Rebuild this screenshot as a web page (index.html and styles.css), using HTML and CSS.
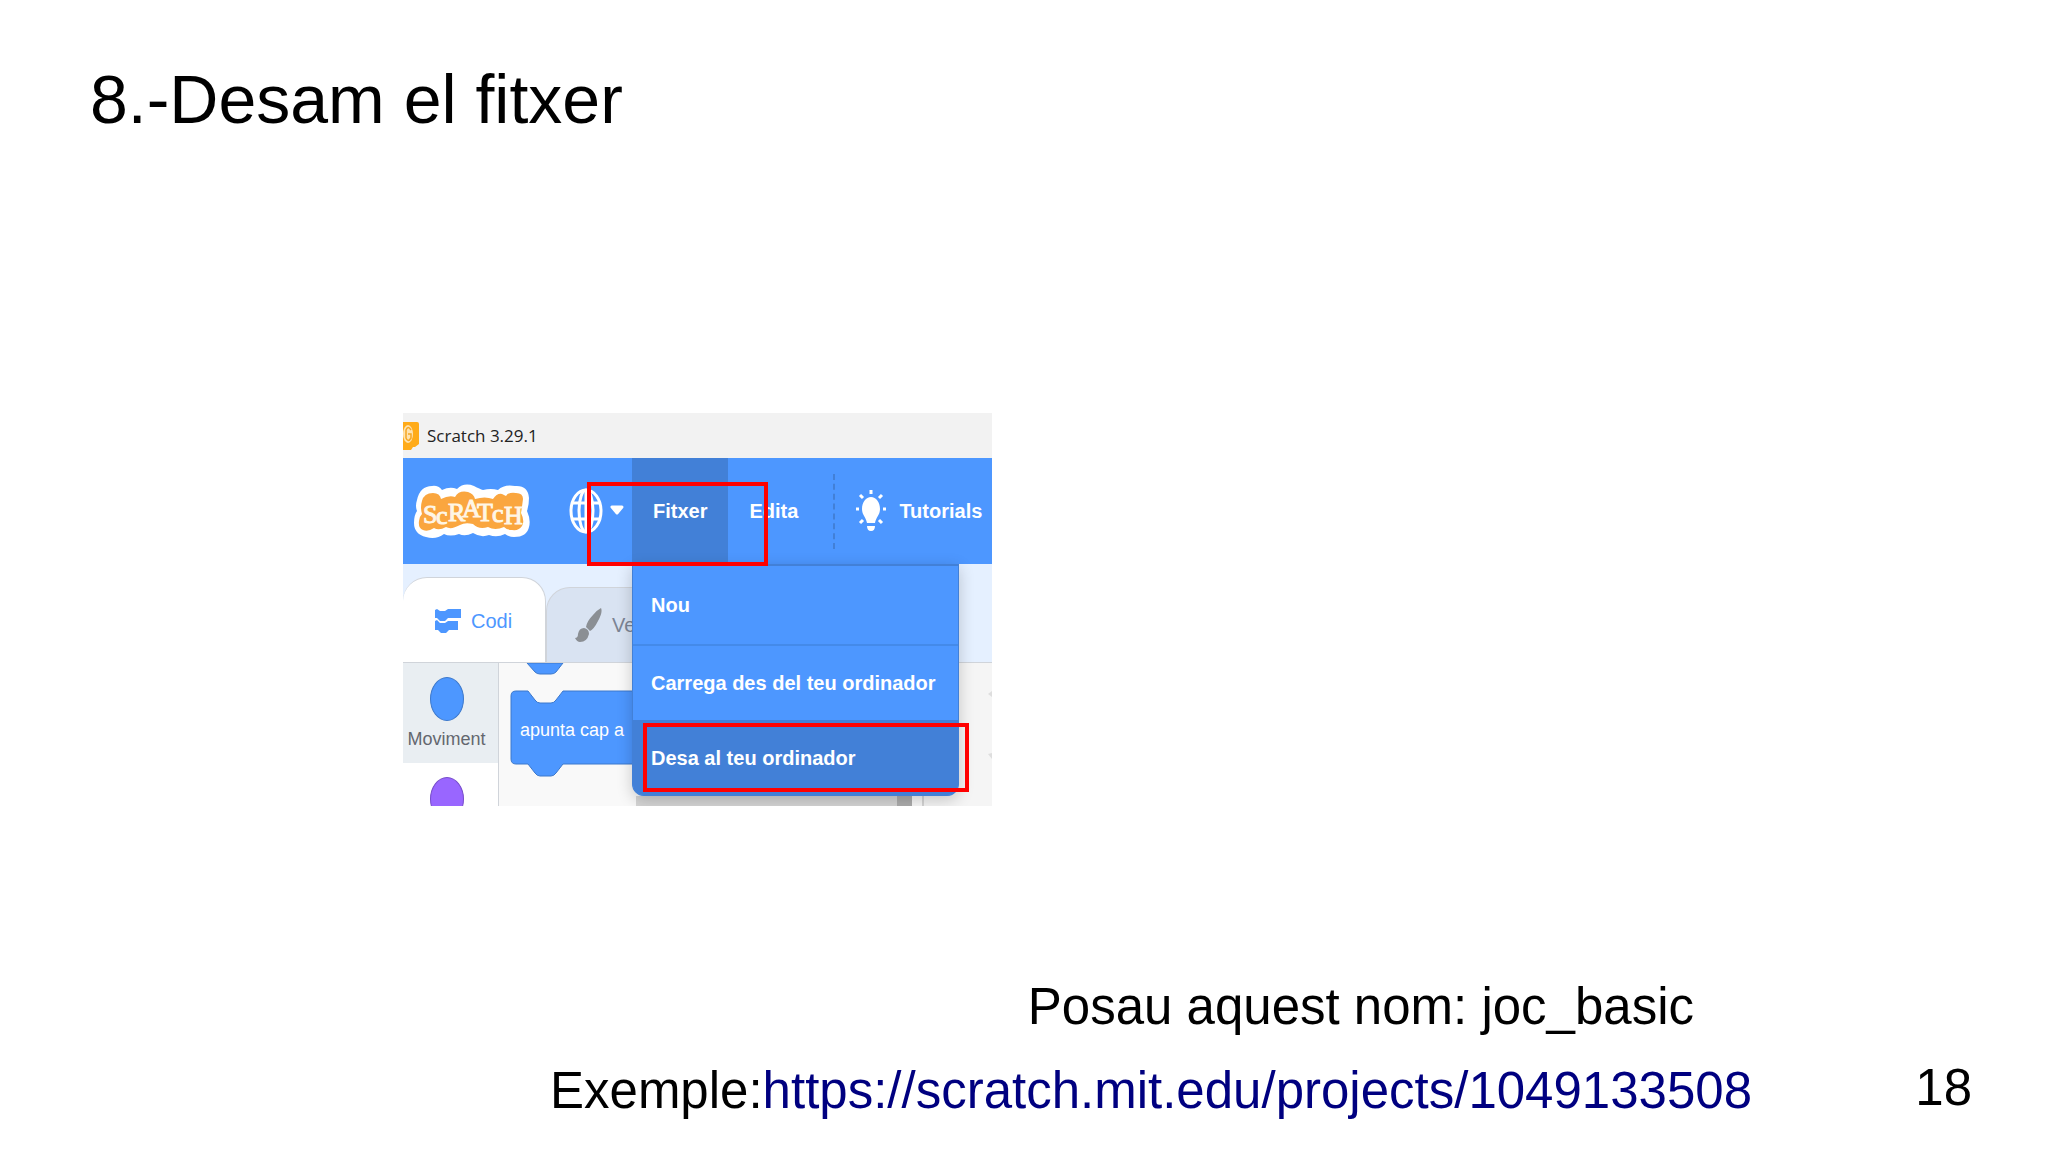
FILE: index.html
```
<!DOCTYPE html>
<html lang="ca">
<head>
    <meta charset="UTF-8">
    <meta name="viewport" content="width=device-width, initial-scale=1.0">
    <title>8.-Desam el fitxer</title>
    <link rel="stylesheet" href="styles.css">
</head>
<body>
    <main class="slide">
        <h1>8.-Desam el fitxer</h1>

        <figure class="app">
            <div class="titlebar">
                <svg class="app-icon" width="16" height="30" viewBox="0 0 16 30">
                    <path d="M0 1h14q2 0 2 2v20l-4 3h-2l-2 3H0z" fill="#ffab19"/>
                    <ellipse cx="5" cy="13" rx="5" ry="9" fill="#ffe3b0"/>
                    <path d="M8 9q-3-5-5 0v8q2 5 5 0v-4H5" fill="none" stroke="#f5a623" stroke-width="1.5"/>
                </svg>
                <span>Scratch 3.29.1</span>
            </div>

            <nav class="menubar">
                <svg class="logo" width="116" height="56" viewBox="0 0 116 56">
                    <path d="M3 17Q6 3 18 3q6-1 10 4 8-4 15-1Q50-1 60 3q6 3 9 4 8-2 15 0 6-6 17-4 13-1 14 12 0 7-2 13 4 9 2 16-2 10-15 10-5 0-9-3-8 4-16 1-8 3-16-2-8 4-14 1-9 3-15 0-8 6-18 3Q0 51 0 40q0-8 3-12-2-5 0-11z" fill="#fff"/>
                    <path d="M8 18q2-8 11-8 7 0 8 6 8-4 14-2 4-7 13-5 6 2 7 7 10-3 18 0 4-6 9-5l4 2q2-4 10-3 7 0 7 6-1 8-2 14 4 8 1 13-3 5-10 4-5 0-8-3-9 4-16 0-9 3-15-3-8-2-13 1-9 5-14 2-7 4-12 1-6 4-11 2-5-2-4-9 0-4 3-7-2-7 0-13z" fill="#faa63f"/>
                    <text class="logo-text" x="9 22 34 48 63 78 90" y="40 41 38 34 38 39 41">ScRATcH</text>
                </svg>
                <button class="language" type="button" aria-label="Idioma">
                    <svg width="56" height="46" viewBox="0 0 56 46" fill="none" stroke="#fff" stroke-width="3">
                        <ellipse cx="18" cy="23" rx="15" ry="21"/>
                        <ellipse cx="18" cy="23" rx="7" ry="21"/>
                        <path d="M18 2v42M5 15h26M5 31h26"/>
                        <path d="M44 19h10l-5 6z" fill="#fff" stroke-linejoin="round"/>
                    </svg>
                </button>
                <button class="menu-item active" type="button">Fitxer</button>
                <button class="menu-item" type="button">Edita</button>
                <span class="divider"></span>
                <button class="tutorials" type="button">
                    <svg width="32" height="44" viewBox="0 0 32 44">
                        <path d="M16 8c5 0 9 5 9 12 0 6-4 8-5 14h-8c-1-6-5-8-5-14C7 13 11 8 16 8z" fill="#fff"/>
                        <path d="M12 37h8q0 5-4 5t-4-5z" fill="#fff"/>
                        <path d="M16 1v4M5 6l3 3M27 6l-3 3M1 20h3M28 20h3M5 34l3-3M27 34l-3-3" stroke="#fff" stroke-width="3"/>
                    </svg>
                    Tutorials
                </button>
                <span class="mark mark-menu"></span>
            </nav>

            <div class="tabs">
                <button class="tab selected" type="button">
                    <svg width="26" height="26" viewBox="0 0 26 26" fill="#4d97ff">
                        <path d="M0 2l2-1 3 2h5l3-2h13v9H13l-3 3H5l-3-3H0z"/>
                        <path d="M0 13l2-1 3 3h5l3-2h10v9h-9l-3 3H6l-3-3H0z"/>
                    </svg>
                    Codi
                </button>
                <button class="tab" type="button">
                    <svg width="27" height="34" viewBox="0 0 27 34" fill="#8b8f94">
                        <path d="M26 0q2 4-3 13-4 8-8 10l-4-4q1-6 7-12 4-5 8-7z"/>
                        <path d="M9 20q5 1 5 6-2 8-9 8-3 0-5-4 3 0 3-4 1-6 6-6z"/>
                    </svg>
                    Ve
                </button>
            </div>

            <div class="editor">
                <div class="categories">
                    <div class="category current">
                        <span class="bubble"></span>
                        Moviment
                    </div>
                    <div class="category">
                        <span class="bubble looks"></span>
                    </div>
                </div>
                <div class="palette">
                    <svg width="134" height="114" viewBox="0 0 134 114">
                        <path d="M17 0h36l-7 9q-2 2-5 2H30q-3 0-5-2z" fill="#4d97ff" stroke="#3d79cc"/>
                        <path d="M1 33q0-5 5-5h12l7 9q2 3 5 3h11q3 0 5-3l7-9h84v73H53l-7 9q-2 3-5 3H30q-3 0-5-3l-7-9H6q-5 0-5-5z" fill="#4d97ff" stroke="#3d79cc"/>
                        <text class="block-text" x="10" y="73">apunta cap a</text>
                    </svg>
                </div>
                <span class="scrollbar"></span>
                <div class="workspace">
                    <svg width="4" height="72" viewBox="0 0 4 72" fill="#dedede">
                        <path d="M4 0v6L0 3zM4 62v6l-4-5z"/>
                    </svg>
                </div>
            </div>

            <ul class="menu">
                <li><button type="button">Nou</button></li>
                <li><button type="button">Carrega des del teu ordinador</button></li>
                <li class="hover"><button type="button">Desa al teu ordinador</button><span class="mark mark-save"></span></li>
            </ul>
        </figure>

        <footer>
            <div class="notes">
                <p class="file-name">Posau aquest nom: joc_basic</p>
                <p>Exemple:<a href="https://scratch.mit.edu/projects/1049133508">https://scratch.mit.edu/projects/1049133508</a></p>
            </div>
            <span class="page-number">18</span>
        </footer>
    </main>
</body>
</html>
```
FILE: styles.css
```
:root {
    --blue: #4d97ff;
    --blue-dark: #4280d7;
    --line: #d0d4da;
    --red: #ff0000;
}

* {
    box-sizing: border-box;
    margin: 0;
    padding: 0;
}

body {
    font-family: "Liberation Sans", Arial, sans-serif;
    color: #000;
    background: #fff;
}

.slide {
    min-height: 100vh;
    display: flex;
    flex-direction: column;
    padding: 59px 76px 19px 90px;
}

h1 {
    font-size: 68px;
    font-weight: 400;
    line-height: 80px;
}

button {
    font: inherit;
    color: inherit;
    background: none;
    border: 0;
    cursor: pointer;
}

svg {
    display: block;
    flex: none;
}

/* Scratch window */
.app {
    position: relative;
    width: 100%;
    max-width: 589px;
    margin: 274px 0 0 313px;
    overflow: hidden;
    font-size: 20px;
}

.titlebar {
    display: flex;
    align-items: center;
    gap: 8px;
    height: 45px;
    background: #f2f2f2;
    color: #222;
    font-family: "Open Sans", "Noto Sans", sans-serif;
    font-size: 17px;
}

.menubar {
    position: relative;
    display: flex;
    align-items: center;
    height: 106px;
    padding-left: 11px;
    background: var(--blue);
    color: #fff;
    font-weight: 700;
}

.language {
    margin: 0 8px 0 38px;
}

.menu-item {
    height: 100%;
    padding: 0 21px;
}

.active {
    background: var(--blue-dark);
}

.divider {
    height: 75px;
    margin: 0 20px 0 14px;
    border-left: 2px dashed var(--blue-dark);
}

.tutorials {
    display: flex;
    align-items: center;
    gap: 12px;
}

.logo-text {
    font-family: "Liberation Serif", serif;
    font-size: 26px;
    font-weight: 400;
    fill: #fff6e6;
    stroke: #fff6e6;
    stroke-width: 1px;
}

/* Tabs */
.tabs {
    display: flex;
    align-items: flex-end;
    height: 99px;
    background: #e5f0ff;
    border-bottom: 1px solid var(--line);
}

.tab {
    display: flex;
    align-items: center;
    gap: 10px;
    width: 143px;
    height: 75px;
    padding-left: 28px;
    background: #d9e3f2;
    border: 1px solid var(--line);
    border-bottom: 0;
    border-radius: 24px 24px 0 0;
    color: #7c8494;
}

.selected {
    height: 85px;
    padding: 2px 0 0 32px;
    background: #fff;
    border-left: 0;
    color: var(--blue);
}

/* Block palette */
.editor {
    display: flex;
    height: 143px;
    background: #f9f9f9;
}

.categories {
    width: 96px;
    background: #fff;
    border-right: 1px solid var(--line);
}

.category {
    display: flex;
    flex-direction: column;
    align-items: center;
    gap: 6px;
    height: 100px;
    padding: 14px 8px 0 0;
    color: #63676f;
    font-size: 18px;
    line-height: 24px;
}

.current {
    background: #e9eef2;
}

.bubble {
    width: 34px;
    height: 44px;
    background: var(--blue);
    border: 1px solid #3d79cc;
    border-radius: 50%;
}

.looks {
    background: #9966ff;
    border-color: #774dcb;
}

.palette {
    flex: 1;
    padding-left: 11px;
    background: linear-gradient(#d5d5d5, #d5d5d5) 137px 100% / 100% 10px no-repeat;
}

.block-text {
    fill: #fff;
    font-size: 18px;
}

.scrollbar {
    width: 15px;
    background: #adadad;
}

.workspace {
    display: flex;
    justify-content: flex-end;
    width: 70px;
    margin-left: 10px;
    padding-top: 28px;
    background: #f5f5f5;
    border-left: 2px solid #d5d5d5;
}

/* File menu */
.menu {
    position: absolute;
    top: 151px;
    left: 229px;
    width: 327px;
    list-style: none;
    background: var(--blue);
    border: 1px solid var(--blue-dark);
    border-top-width: 2px;
    border-radius: 0 0 12px 12px;
    box-shadow: 0 4px 16px rgba(0, 0, 0, 0.2);
    color: #fff;
    font-weight: 700;
}

.menu li {
    position: relative;
}

.menu li + li {
    border-top: 2px solid #448ae9;
}

.menu button {
    width: 100%;
    height: 74px;
    padding-left: 18px;
    text-align: left;
}

.menu li:first-child button {
    height: 78px;
}

.menu .hover {
    background: var(--blue-dark);
    border-color: var(--blue-dark);
    border-radius: 0 0 10px 10px;
}

.menu .hover button {
    height: 73px;
}

/* Red highlight boxes */
.mark {
    position: absolute;
    border: 4px solid var(--red);
    pointer-events: none;
}

.mark-menu {
    top: 24px;
    left: 184px;
    width: 181px;
    height: 84px;
    z-index: 2;
}

.mark-save {
    top: 1px;
    left: 10px;
    width: 326px;
    height: 69px;
}

/* Slide footer */
footer {
    display: flex;
    justify-content: space-between;
    align-items: flex-end;
    margin-top: auto;
    padding-left: 460px;
    font-size: 51px;
    line-height: 84px;
}

.file-name {
    padding-right: 58px;
    text-align: right;
}

.page-number {
    padding-bottom: 3px;
}

footer a {
    color: #000080;
    text-decoration: none;
}
```
